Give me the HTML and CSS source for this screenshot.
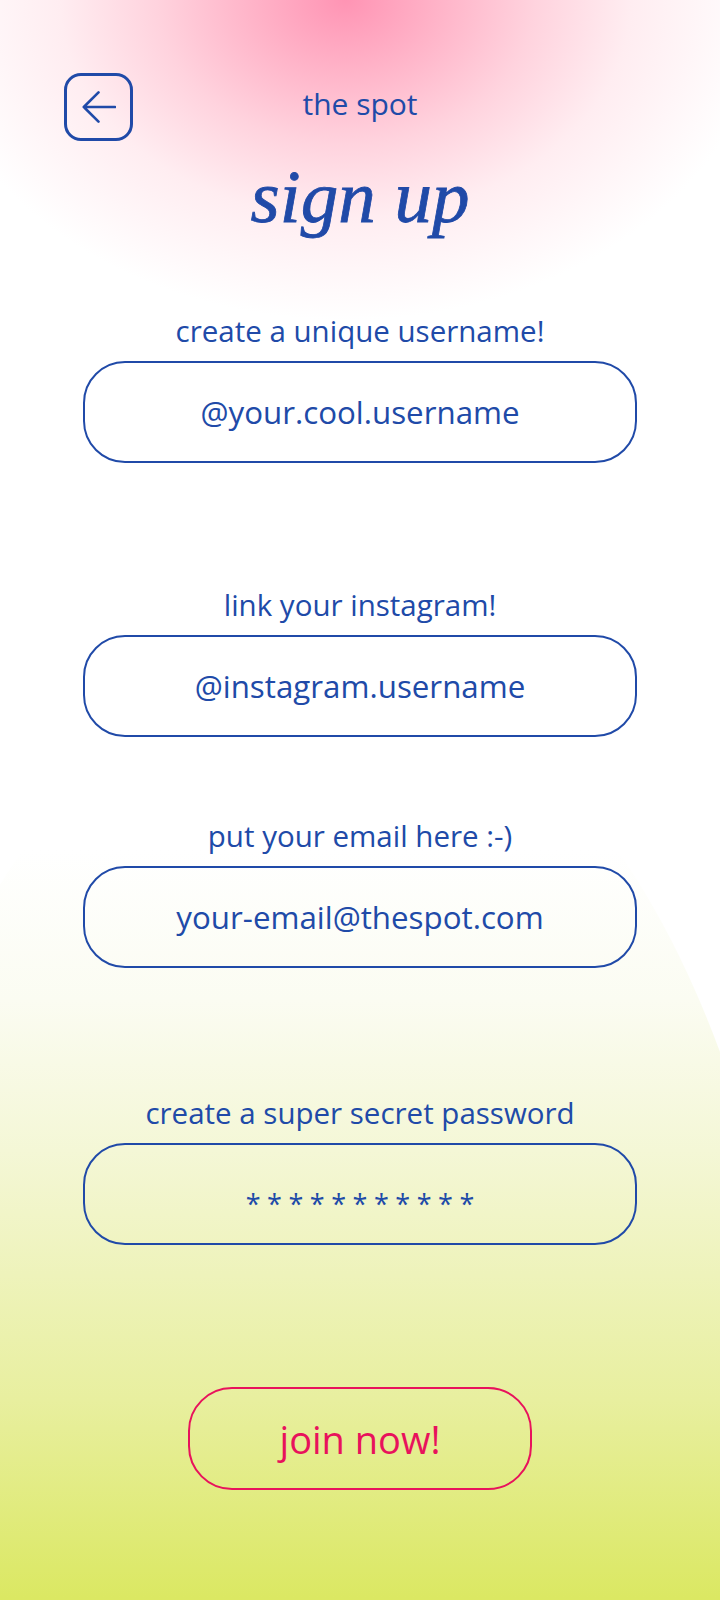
FILE: index.html
```html
<!DOCTYPE html>
<html lang="en">
<head>
<meta charset="utf-8">
<title>the spot – sign up</title>
<link rel="stylesheet" href="styles.css">
</head>
<body>
<div class="page">
  <div class="glow-top"></div>
  <div class="glow-bottom"></div>

  <header class="header">
    <button class="back" aria-label="back">
      <svg class="back-icon" viewBox="0 0 34 32" width="34" height="32">
        <path d="M33 16H1.8M16.5 1.4L1.8 16L16.5 30.6" fill="none" stroke="currentColor" stroke-width="2.6" stroke-linecap="round" stroke-linejoin="round"/>
      </svg>
    </button>
    <div class="brand">the spot</div>
  </header>

  <h1 class="heading">sign up</h1>

  <main class="form">
    <div class="field">
      <div class="label">create a unique username!</div>
      <div class="input">@your.cool.username</div>
    </div>
    <div class="field field-gap-lg">
      <div class="label">link your instagram!</div>
      <div class="input">@instagram.username</div>
    </div>
    <div class="field field-gap-sm">
      <div class="label">put your email here :-)</div>
      <div class="input">your-email@thespot.com</div>
    </div>
    <div class="field field-gap-xl">
      <div class="label">create a super secret password</div>
      <div class="input input-password">***********</div>
    </div>
    <button class="join">join now!</button>
  </main>
</div>
</body>
</html>
```

FILE: styles.css
```css
* {
  box-sizing: border-box;
}

html,
body {
  margin: 0;
  padding: 0;
  background: #ffffff;
}

.page {
  position: relative;
  width: 720px;
  height: 1600px;
  overflow: hidden;
  background: #ffffff;
  font-family: "Open Sans", "Noto Sans", sans-serif;
  color: #204aa8;
}

.glow-top {
  position: absolute;
  left: 0;
  top: 0;
  width: 720px;
  height: 420px;
  background: radial-gradient(ellipse 420px 320px at 48% 0, #ff94b4 0%, #ffb3c8 22%, #ffd3de 45%, #ffedf1 68%, rgba(255, 255, 255, 0) 100%);
  pointer-events: none;
}

.glow-bottom {
  position: absolute;
  left: -165px;
  top: 661px;
  width: 970px;
  height: 1800px;
  border-radius: 50%;
  background: linear-gradient(to bottom, #ffffff 0%, #ffffff 10.5%, #fbfcf2 18.8%, #f4f7d6 27.2%, #e8ef9f 41%, #dbe863 52%, #d7e55a 60%, #d7e55a 100%);
  pointer-events: none;
}

.header,
.heading,
.form {
  position: relative;
}

.header {
  display: grid;
  grid-template-columns: 1fr auto 1fr;
  align-items: start;
  padding: 73px 64px 0;
}

.back {
  display: flex;
  align-items: center;
  justify-content: center;
  width: 69px;
  height: 68px;
  padding: 0;
  border: 3px solid #204aa8;
  border-radius: 17px;
  background: transparent;
  color: #204aa8;
}

.back-icon {
  display: block;
}

.brand {
  margin-top: 13px;
  font-size: 30px;
  line-height: 36px;
  color: #204aa8;
}

.heading {
  margin: 18px 0 0;
  font-family: "Liberation Serif", "Times New Roman", serif;
  font-style: italic;
  font-weight: 400;
  font-size: 75px;
  line-height: 75px;
  text-align: center;
  color: #204aa8;
  -webkit-text-stroke: 0.8px #204aa8;
}

.form {
  display: flex;
  flex-direction: column;
  align-items: center;
  width: 554px;
  margin: 79px auto 0;
}

.field {
  display: flex;
  flex-direction: column;
  width: 100%;
}

.field-gap-lg {
  margin-top: 124px;
}

.field-gap-sm {
  margin-top: 81px;
}

.field-gap-xl {
  margin-top: 127px;
}

.label {
  margin-bottom: 12px;
  font-size: 29.5px;
  line-height: 36px;
  text-align: center;
}

.input {
  display: flex;
  align-items: center;
  justify-content: center;
  height: 102px;
  border: 2px solid #204aa8;
  border-radius: 42px;
  font-size: 31.3px;
  color: #204aa8;
}

.input-password {
  padding-top: 18px;
  font-size: 27px;
  letter-spacing: 6.5px;
  text-indent: 6.5px;
}

.join {
  margin-top: 142px;
  width: 344px;
  height: 103px;
  padding: 0;
  border: 2px solid #e8125c;
  border-radius: 44px;
  background: transparent;
  font-family: "Open Sans", "Noto Sans", sans-serif;
  font-size: 38px;
  color: #e8125c;
}
```
